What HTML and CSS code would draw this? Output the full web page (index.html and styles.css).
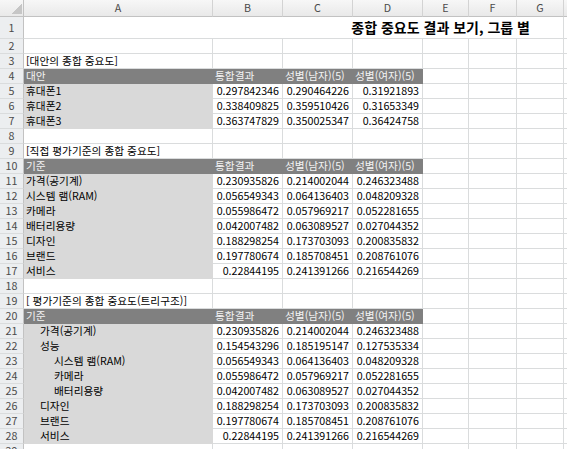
FILE: index.html
```html
<!DOCTYPE html>
<html lang="ko">
<head>
<meta charset="utf-8">
<title>종합 중요도 결과 보기</title>
<link rel="stylesheet" href="styles.css">
</head>
<body>
<div class="sheet">
  <div class="r ch"><div class="corner"></div><div>A</div><div>B</div><div>C</div><div>D</div><div>E</div><div>F</div><div>G</div><div></div></div>
  <div class="r tr"><div class="rh">1</div><div class="title">종합 중요도 결과 보기, 그룹 별</div><div></div></div>
  <div class="r"><div class="rh">2</div><div></div><div></div><div></div><div></div><div></div><div></div><div></div><div></div></div>
  <div class="r"><div class="rh">3</div><div>[대안의 종합 중요도]</div><div></div><div></div><div></div><div></div><div></div><div></div><div></div></div>
  <div class="r"><div class="rh">4</div><div class="hd">대안</div><div class="hd">통합결과</div><div class="hd">성별(남자)(5)</div><div class="hd">성별(여자)(5)</div><div></div><div></div><div></div><div></div></div>
  <div class="r"><div class="rh">5</div><div class="fl">휴대폰1</div><div class="n">0.297842346</div><div class="n">0.290464226</div><div class="n">0.31921893</div><div></div><div></div><div></div><div></div></div>
  <div class="r"><div class="rh">6</div><div class="fl">휴대폰2</div><div class="n">0.338409825</div><div class="n">0.359510426</div><div class="n">0.31653349</div><div></div><div></div><div></div><div></div></div>
  <div class="r"><div class="rh">7</div><div class="fl">휴대폰3</div><div class="n">0.363747829</div><div class="n">0.350025347</div><div class="n">0.36424758</div><div></div><div></div><div></div><div></div></div>
  <div class="r"><div class="rh">8</div><div></div><div></div><div></div><div></div><div></div><div></div><div></div><div></div></div>
  <div class="r"><div class="rh">9</div><div>[직접 평가기준의 종합 중요도]</div><div></div><div></div><div></div><div></div><div></div><div></div><div></div></div>
  <div class="r"><div class="rh">10</div><div class="hd">기준</div><div class="hd">통합결과</div><div class="hd">성별(남자)(5)</div><div class="hd">성별(여자)(5)</div><div></div><div></div><div></div><div></div></div>
  <div class="r"><div class="rh">11</div><div class="fl">가격(공기계)</div><div class="n">0.230935826</div><div class="n">0.214002044</div><div class="n">0.246323488</div><div></div><div></div><div></div><div></div></div>
  <div class="r"><div class="rh">12</div><div class="fl">시스템 램(RAM)</div><div class="n">0.056549343</div><div class="n">0.064136403</div><div class="n">0.048209328</div><div></div><div></div><div></div><div></div></div>
  <div class="r"><div class="rh">13</div><div class="fl">카메라</div><div class="n">0.055986472</div><div class="n">0.057969217</div><div class="n">0.052281655</div><div></div><div></div><div></div><div></div></div>
  <div class="r"><div class="rh">14</div><div class="fl">배터리용량</div><div class="n">0.042007482</div><div class="n">0.063089527</div><div class="n">0.027044352</div><div></div><div></div><div></div><div></div></div>
  <div class="r"><div class="rh">15</div><div class="fl">디자인</div><div class="n">0.188298254</div><div class="n">0.173703093</div><div class="n">0.200835832</div><div></div><div></div><div></div><div></div></div>
  <div class="r"><div class="rh">16</div><div class="fl">브랜드</div><div class="n">0.197780674</div><div class="n">0.185708451</div><div class="n">0.208761076</div><div></div><div></div><div></div><div></div></div>
  <div class="r"><div class="rh">17</div><div class="fl">서비스</div><div class="n">0.22844195</div><div class="n">0.241391266</div><div class="n">0.216544269</div><div></div><div></div><div></div><div></div></div>
  <div class="r"><div class="rh">18</div><div></div><div></div><div></div><div></div><div></div><div></div><div></div><div></div></div>
  <div class="r"><div class="rh">19</div><div>[ 평가기준의 종합 중요도(트리구조)]</div><div></div><div></div><div></div><div></div><div></div><div></div><div></div></div>
  <div class="r"><div class="rh">20</div><div class="hd">기준</div><div class="hd">통합결과</div><div class="hd">성별(남자)(5)</div><div class="hd">성별(여자)(5)</div><div></div><div></div><div></div><div></div></div>
  <div class="r"><div class="rh">21</div><div class="fl i1">가격(공기계)</div><div class="n">0.230935826</div><div class="n">0.214002044</div><div class="n">0.246323488</div><div></div><div></div><div></div><div></div></div>
  <div class="r"><div class="rh">22</div><div class="fl i1">성능</div><div class="n">0.154543296</div><div class="n">0.185195147</div><div class="n">0.127535334</div><div></div><div></div><div></div><div></div></div>
  <div class="r"><div class="rh">23</div><div class="fl i2">시스템 램(RAM)</div><div class="n">0.056549343</div><div class="n">0.064136403</div><div class="n">0.048209328</div><div></div><div></div><div></div><div></div></div>
  <div class="r"><div class="rh">24</div><div class="fl i2">카메라</div><div class="n">0.055986472</div><div class="n">0.057969217</div><div class="n">0.052281655</div><div></div><div></div><div></div><div></div></div>
  <div class="r"><div class="rh">25</div><div class="fl i2">배터리용량</div><div class="n">0.042007482</div><div class="n">0.063089527</div><div class="n">0.027044352</div><div></div><div></div><div></div><div></div></div>
  <div class="r"><div class="rh">26</div><div class="fl i1">디자인</div><div class="n">0.188298254</div><div class="n">0.173703093</div><div class="n">0.200835832</div><div></div><div></div><div></div><div></div></div>
  <div class="r"><div class="rh">27</div><div class="fl i1">브랜드</div><div class="n">0.197780674</div><div class="n">0.185708451</div><div class="n">0.208761076</div><div></div><div></div><div></div><div></div></div>
  <div class="r"><div class="rh">28</div><div class="fl i1">서비스</div><div class="n">0.22844195</div><div class="n">0.241391266</div><div class="n">0.216544269</div><div></div><div></div><div></div><div></div></div>
  <div class="r"><div class="rh">29</div><div></div><div></div><div></div><div></div><div></div><div></div><div></div><div></div></div>
</div>
</body>
</html>
```
FILE: styles.css
```css
html, body {
  margin: 0;
  padding: 0;
}
body {
  width: 567px;
  height: 449px;
  overflow: hidden;
  background: #ffffff;
  font-family: "Noto Sans CJK KR", "Noto Sans", sans-serif;
  font-size: 10.7px;
  color: #000000;
}
.sheet {
  display: flex;
  flex-direction: column;
}
.r {
  display: grid;
  grid-template-columns: 24px 189px 70px 70px 70px 46px 48px 47px 1fr;
  height: 15px;
  flex: none;
}
.r > div {
  box-sizing: border-box;
  border-right: 1px solid #dadcdd;
  border-bottom: 1px solid #dadcdd;
  white-space: nowrap;
  line-height: 14px;
  padding: 0 2px;
  min-width: 0;
}
.ch {
  height: 17px;
  background: linear-gradient(#f7f7f7, #e8e8e8);
}
.ch > div {
  text-align: center;
  color: #4a4a4a;
  line-height: 16px;
  border-right-color: #d3d3d3;
  border-bottom-color: #c2c2c2;
}
.ch > .corner {
  border-right-color: #c2c2c2;
  background: linear-gradient(to bottom right, transparent 50%, #c6c6c6 50%) no-repeat right 1px bottom 2px / 10px 10px;
}
.r > .rh {
  background: #eceef0;
  text-align: center;
  color: #4a4a4a;
  border-right-color: #c2c2c2;
  padding: 0;
}
.tr {
  height: 22px;
}
.tr > div {
  line-height: 21px;
}
.r > .title {
  grid-column: 2 / 9;
  text-align: right;
  padding-right: 33px;
  font-weight: bold;
  font-size: 14px;
}
.r > .hd {
  background: #808080;
  border-color: #808080;
  color: #f4f4f4;
}
.r > .fl {
  background: #d9d9d9;
  border-color: #d9d9d9;
}
.r > .n {
  text-align: right;
  padding-right: 3px;
}
.r > .i1 {
  padding-left: 16px;
}
.r > .i2 {
  padding-left: 30px;
}
```
